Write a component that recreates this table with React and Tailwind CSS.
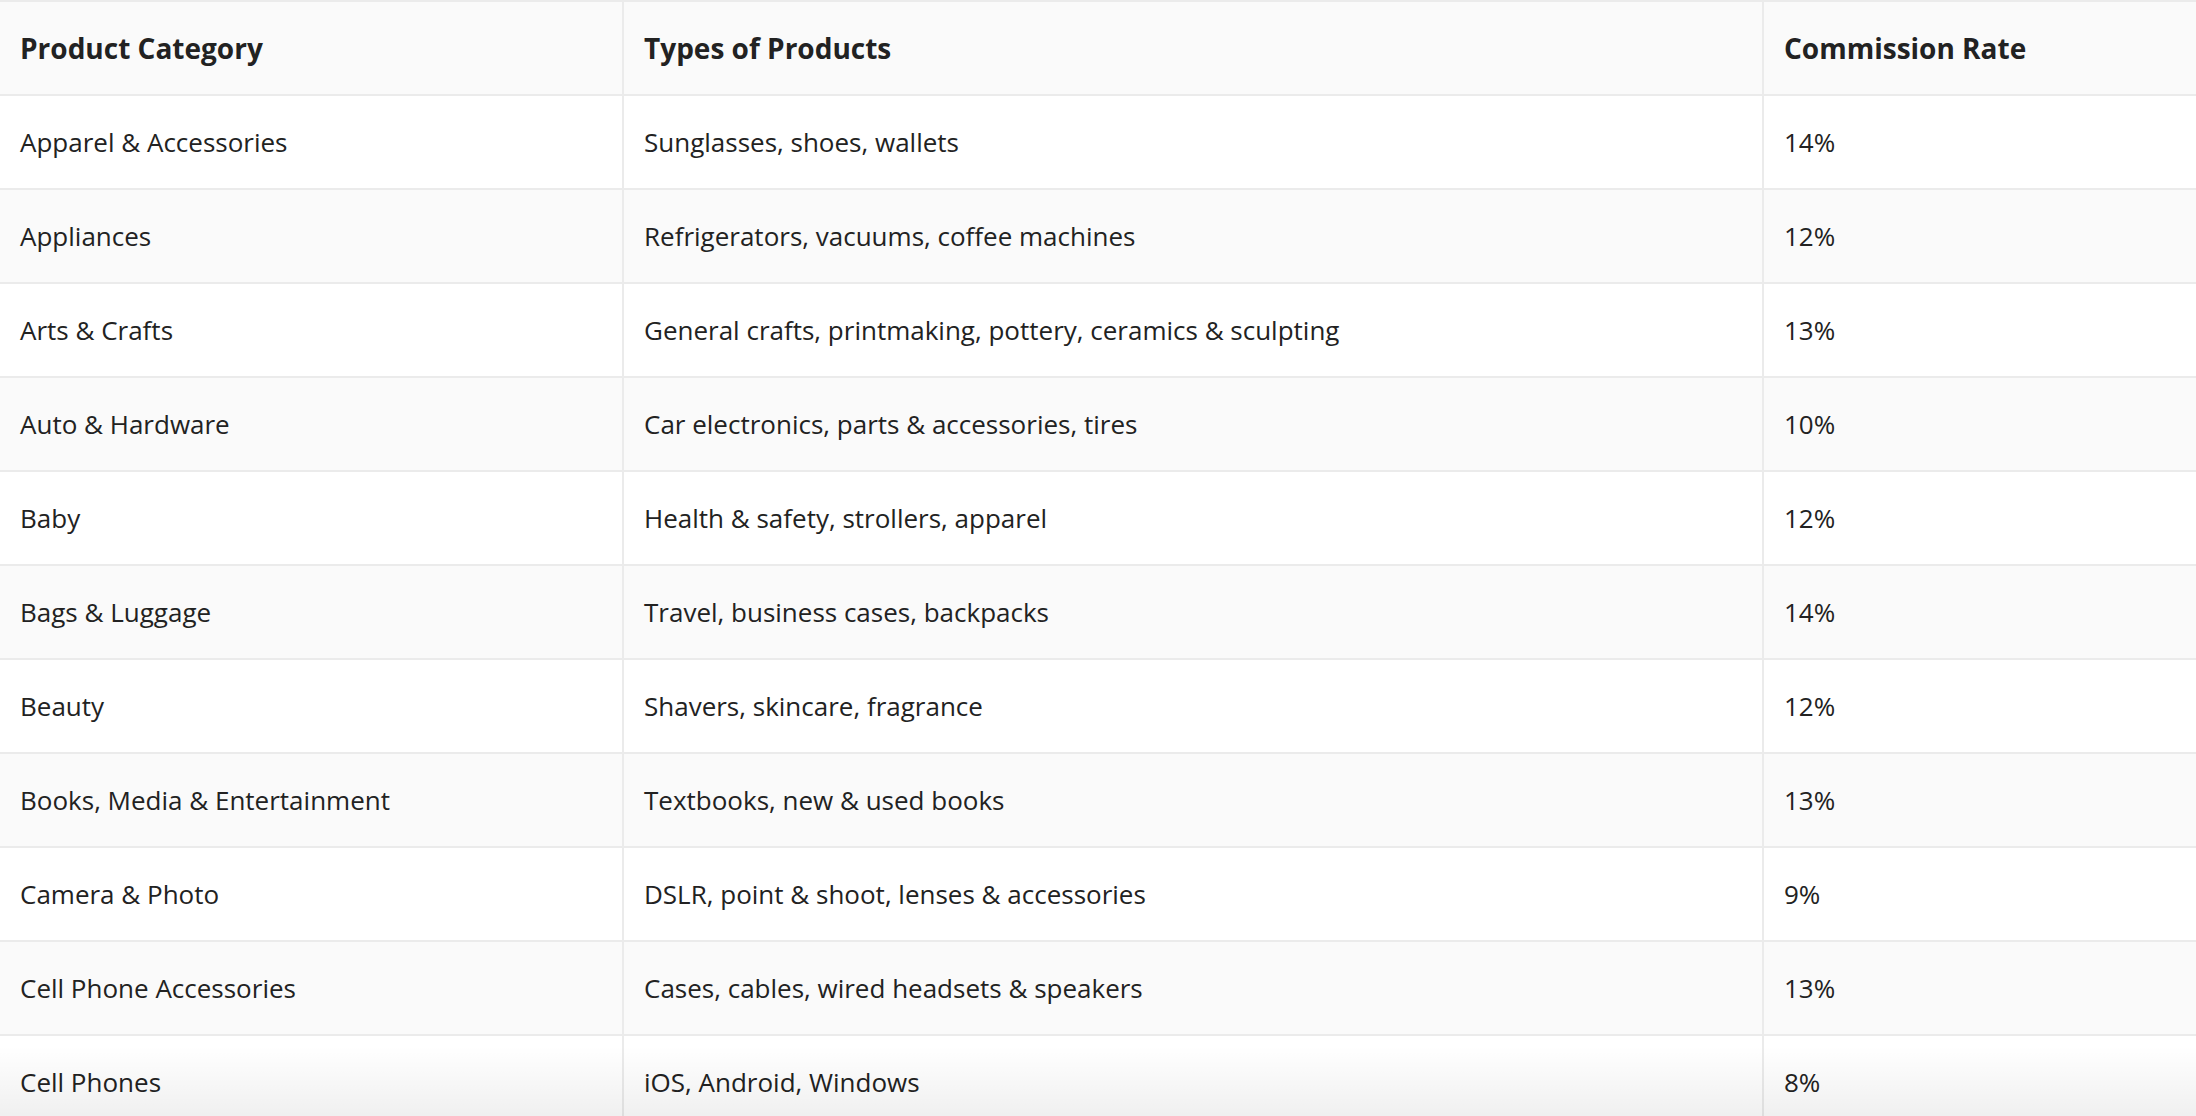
import React from "react";

const rows = [
  ["Apparel & Accessories", "Sunglasses, shoes, wallets", "14%"],
  ["Appliances", "Refrigerators, vacuums, coffee machines", "12%"],
  ["Arts & Crafts", "General crafts, printmaking, pottery, ceramics & sculpting", "13%"],
  ["Auto & Hardware", "Car electronics, parts & accessories, tires", "10%"],
  ["Baby", "Health & safety, strollers, apparel", "12%"],
  ["Bags & Luggage", "Travel, business cases, backpacks", "14%"],
  ["Beauty", "Shavers, skincare, fragrance", "12%"],
  ["Books, Media & Entertainment", "Textbooks, new & used books", "13%"],
  ["Camera & Photo", "DSLR, point & shoot, lenses & accessories", "9%"],
  ["Cell Phone Accessories", "Cases, cables, wired headsets & speakers", "13%"],
  ["Cell Phones", "iOS, Android, Windows", "8%"],
];

function Row({ cells, header, striped }) {
  const bg = header || striped ? "bg-[#fafafa]" : "bg-white";
  return (
    <div
      className={`grid grid-cols-[622px_1140px_1fr] border-b-2 border-[#ebebeb] ${bg} ${
        header ? "h-[96px] border-t-2 text-[28px] font-bold" : "h-[94px]"
      }`}
    >
      {cells.map((c, i) => (
        <div
          key={i}
          className={`flex items-center pl-5 ${i > 0 ? "border-l-2 border-[#ebebeb]" : ""}`}
        >
          {c}
        </div>
      ))}
    </div>
  );
}

export default function App() {
  return (
    <div
      className="relative h-[1116px] overflow-hidden bg-white text-[26px] text-[#222222]"
      style={{ fontFamily: '"Open Sans", "Noto Sans", sans-serif' }}
    >
      <Row header cells={["Product Category", "Types of Products", "Commission Rate"]} />
      {rows.map((r, i) => (
        <Row key={r[0]} cells={r} striped={i % 2 === 1} />
      ))}
      <div className="pointer-events-none absolute inset-x-0 bottom-0 h-[70px] bg-gradient-to-b from-transparent to-black/[0.06]" />
    </div>
  );
}
